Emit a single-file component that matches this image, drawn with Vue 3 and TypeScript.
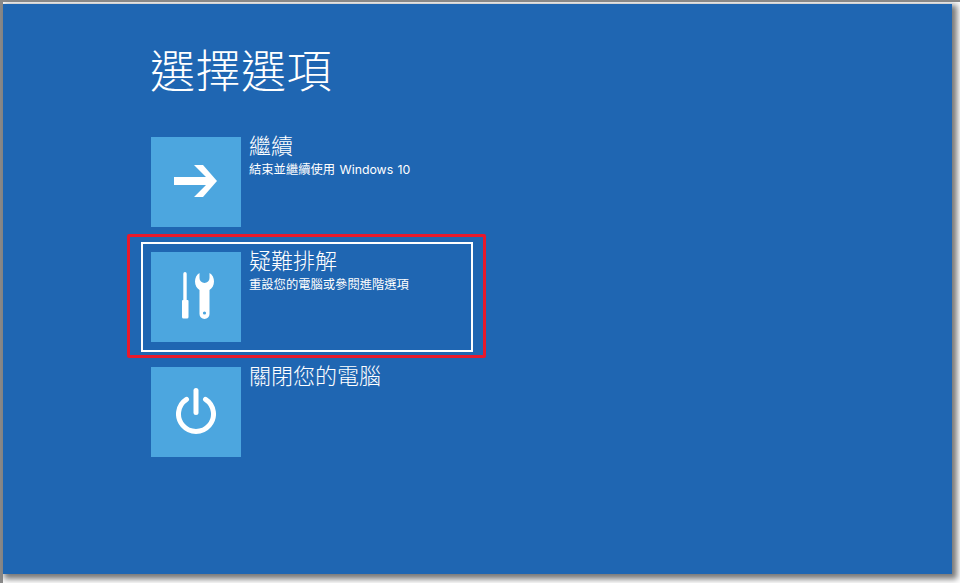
<script setup lang="ts">
const options = [
  { id: 'continue', title: '繼續', sub: '結束並繼續使用 Windows 10', focused: false },
  { id: 'troubleshoot', title: '疑難排解', sub: '重設您的電腦或參閱進階選項', focused: true },
  { id: 'shutdown', title: '關閉您的電腦', sub: '', focused: false },
];
</script>

<template>
  <div class="shot">
    <main class="screen">
      <h1 class="screen__title">選擇選項</h1>
      <ul class="options">
        <li
          v-for="opt in options"
          :key="opt.id"
          class="option"
          :class="{ 'option--focused': opt.focused }"
        >
          <div class="option__tile">
            <svg v-if="opt.id === 'continue'" width="44" height="34" viewBox="0 0 44 34">
              <path d="M0 12H32L20 0H29L43 16L29 32H20L32 20H0Z" fill="#fff" />
            </svg>
            <svg v-else-if="opt.id === 'troubleshoot'" width="36" height="50" viewBox="-4 0 36 50">
              <path d="M1.300 1.700a1.700 1.700 0 0 1 3.400 0V28h.8a1 1 0 0 1 1 1V45a1.500 1.500 0 0 1-1.500 1.500H1.500A1.500 1.500 0 0 1 0 45V29a1 1 0 0 1 1-1h.3Z" fill="#fff" />
              <path fill-rule="evenodd" d="M17.500 1V6a5 5 0 0 0 10 0V1C30.500 2.500 32 6 32 9.500C32 13.500 30 16.500 27.500 18V42a5 5 0 0 1-10 0V18C15 16.500 13 13.500 13 9.500C13 6 14.500 2.500 17.500 1ZM22.500 39.400a1.600 1.600 0 1 0 0 3.200a1.600 1.600 0 0 0 0-3.200Z" fill="#fff" />
            </svg>
            <svg v-else width="40" height="48" viewBox="0 0 40 48">
              <path d="M20 2.500V24.500" fill="none" stroke="#fff" stroke-width="5" stroke-linecap="round" />
              <path d="M10.500 11.300a17.500 17.500 0 1 0 19 0" fill="none" stroke="#fff" stroke-width="5" stroke-linecap="round" />
            </svg>
          </div>
          <div class="option__text">
            <div class="option__title">{{ opt.title }}</div>
            <div v-if="opt.sub" class="option__sub">{{ opt.sub }}</div>
          </div>
        </li>
      </ul>
    </main>
  </div>
</template>

<style>
html, body { margin: 0; background: #fff; }
</style>

<style scoped>
.shot {
  width: 960px;
  height: 583px;
  box-sizing: border-box;
  padding: 4px 8px 9px 3px;
  background: #fff;
  overflow: hidden;
  position: relative;
  box-shadow: inset 3px 2px 0 #8a8a8a;
}
.screen {
  height: 100%;
  box-sizing: border-box;
  padding: 34px 0 0 148px;
  background: #1f66b2;
  color: #fff;
  font-family: "Noto Sans CJK TC", "Noto Sans", sans-serif;
  box-shadow: 3px 3px 6px 2px #777;
}
.screen__title {
  margin: 0 0 0 -1px;
  font-size: 45px;
  font-weight: 300;
  line-height: 62px;
  letter-spacing: 0.5px;
}
.options {
  list-style: none;
  margin: 37px 0 0;
  padding: 0;
  display: flex;
  flex-direction: column;
  gap: 25px;
}
.option {
  position: relative;
  display: flex;
  gap: 8px;
  height: 90px;
}
.option--focused::before {
  content: '';
  position: absolute;
  left: -10px;
  top: -10px;
  width: 332px;
  height: 110px;
  box-sizing: border-box;
  border: 2px solid #fff;
}
.option--focused::after {
  content: '';
  position: absolute;
  left: -24px;
  top: -18px;
  width: 359px;
  height: 124px;
  box-sizing: border-box;
  border: 3px solid #e8192c;
  border-radius: 2px;
}
.option__tile {
  width: 90px;
  height: 90px;
  flex: none;
  display: flex;
  align-items: center;
  justify-content: center;
  background: #4ca6df;
}
.option__title {
  font-size: 22px;
  line-height: 20px;
  margin-top: -3px;
  font-weight: 300;
}
.option__sub {
  font-size: 12.3px;
  line-height: 18px;
  margin-top: 7px;
  word-spacing: 1px;
  font-family: Inter, "Noto Sans CJK TC", sans-serif;
}
</style>
